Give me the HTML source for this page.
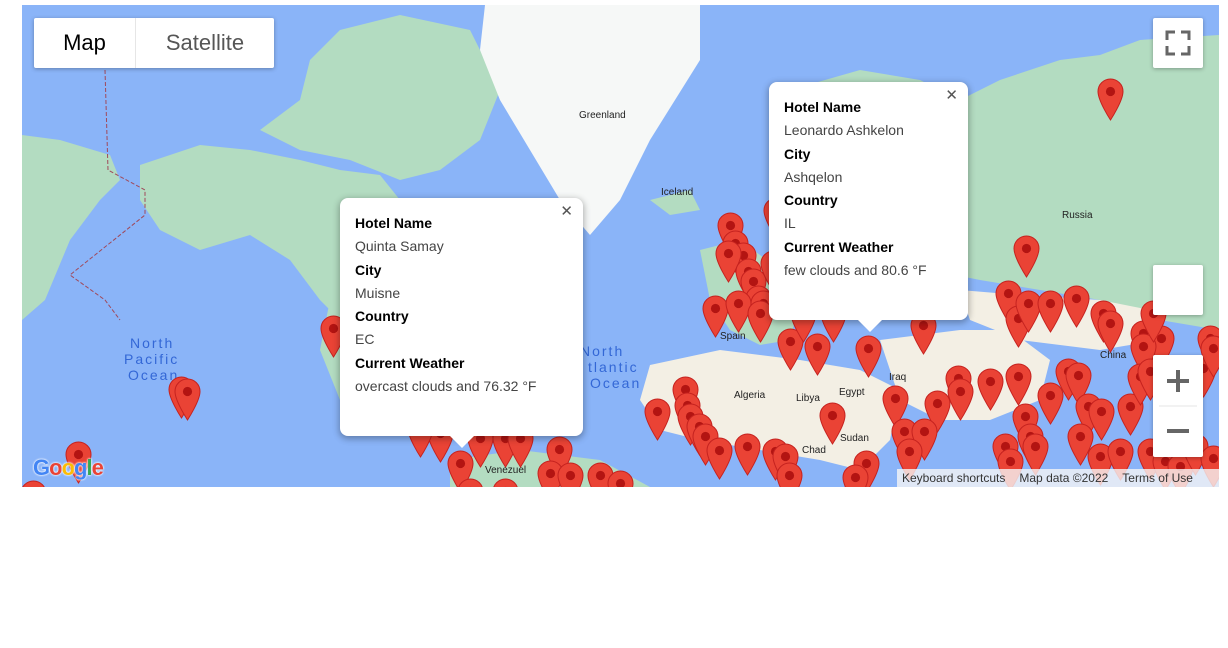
<!DOCTYPE html>
<html><head><meta charset="utf-8"><style>
body{margin:0;width:1228px;height:648px;background:#fff;position:relative;overflow:hidden;font-family:"Liberation Sans",Arial,sans-serif}
#map{position:absolute;left:22px;top:5px;width:1197px;height:482px;background:#8ab4f8;overflow:hidden}
#map svg{position:absolute;left:-22px;top:-5px}
.ctl{position:absolute;background:#fff;border-radius:2px;box-shadow:0 1px 4px rgba(0,0,0,.3)}
.iw{position:absolute;background:#fff;border-radius:8px;box-shadow:0 2px 7px 1px rgba(0,0,0,.3);padding:14px 15px;box-sizing:border-box;font-size:14px;line-height:23.3px}
.iw b{display:block;color:#000;font-weight:bold}
.iw span{display:block;color:#444;font-weight:300}
.iw .x{position:absolute;right:10px;top:2px;font-size:15px;color:#555;font-weight:normal}
.tail{position:absolute;width:0;height:0;border-left:12px solid transparent;border-right:12px solid transparent;border-top:12px solid #fff}
</style></head><body>
<div id="map">
<svg width="1241" height="492" viewBox="0 0 1241 492">
<defs>
<g id="p"><path d="M13.5 1C6.6 1 1 6.6 1 13.5c0 9.5 12.5 28.5 12.5 28.5S26 23 26 13.5C26 6.6 20.4 1 13.5 1z" fill="#ea4335" stroke="#c5221f" stroke-width="1"/><circle cx="13.5" cy="13.5" r="4.6" fill="#b31412"/></g>
</defs>
<g fill="#b3dcc1">
<path d="M22 135 L60 140 L110 155 L120 180 L100 200 L70 240 L45 300 L22 320Z"/>
<path d="M140 165 L200 145 L250 150 L300 160 L340 170 L380 175 L400 200 L430 230 L470 235 L520 225 L560 215 L575 240 L560 270 L520 290 L480 300 L420 320 L390 340 L350 330 L320 300 L290 260 L250 235 L200 250 L160 230 L140 200Z"/>
<path d="M260 130 L300 100 L310 60 L340 30 L400 15 L470 30 L500 90 L480 140 L440 170 L400 180 L350 160 L300 150Z"/>
<path d="M650 200 L690 190 L700 210 L670 215Z"/>
<path d="M790 90 L860 70 L920 80 L960 100 L1000 80 L1060 60 L1100 55 L1140 40 L1219 35 L1219 330 L1160 320 L1100 300 L1040 290 L980 280 L930 270 L880 260 L840 250 L810 230 L800 190 L790 150Z"/>
<path d="M700 250 L740 240 L780 270 L800 300 L790 340 L760 345 L730 330 L710 300Z"/>
<path d="M330 300 L420 310 L440 420 L400 430 L340 400 L320 350Z"/>
<path d="M450 460 L520 450 L600 460 L650 487 L450 487Z"/>
</g>
<g fill="#f3efe4">
<path d="M650 365 L720 350 L800 360 L860 370 L900 390 L890 440 L860 470 L820 460 L760 450 L700 440 L660 430 L640 400Z"/>
<path d="M880 340 L960 330 L1010 330 L1050 360 L1040 400 L990 420 L940 420 L900 400Z"/>
<path d="M960 290 L1020 295 L1100 300 L1150 310 L1160 340 L1100 350 L1020 340 L970 320Z"/>
</g>
<path d="M485 5 L700 5 L700 60 L650 140 L620 200 L590 235 L560 200 L530 150 L500 100 L480 50Z" fill="#f6f8f7"/>
<path d="M105 70 L108 170 L145 190 L145 215 L70 275 L105 300 L120 320" fill="none" stroke="#a0495a" stroke-width="1" stroke-dasharray="4 2"/>
<g font-size="10" fill="#222" font-family="Liberation Sans,sans-serif">
<text x="579" y="118">Greenland</text><text x="661" y="195">Iceland</text><text x="1062" y="218">Russia</text>
<text x="734" y="398">Algeria</text><text x="796" y="401">Libya</text><text x="839" y="395">Egypt</text><text x="802" y="453">Chad</text><text x="840" y="441">Sudan</text><text x="720" y="339">Spain</text><text x="889" y="380">Iraq</text><text x="1100" y="358">China</text><text x="485" y="473">Venezuel</text>
</g>
<g font-size="14" fill="#3367d6" letter-spacing="2" font-family="Liberation Sans,sans-serif">
<text x="130" y="348">North</text><text x="124" y="364">Pacific</text><text x="128" y="380">Ocean</text>
<text x="580" y="356">North</text><text x="588" y="372">tlantic</text><text x="590" y="388">Ocean</text>
</g>
<g>
<use href="#p" x="1097" y="78"/><use href="#p" x="1013" y="235"/>
<use href="#p" x="168" y="376"/><use href="#p" x="174" y="378"/>
<use href="#p" x="65" y="441"/><use href="#p" x="20" y="480"/><use href="#p" x="320" y="315"/>
<use href="#p" x="717" y="212"/><use href="#p" x="722" y="230"/><use href="#p" x="730" y="242"/><use href="#p" x="715" y="240"/><use href="#p" x="735" y="258"/><use href="#p" x="740" y="268"/><use href="#p" x="745" y="285"/><use href="#p" x="760" y="250"/><use href="#p" x="763" y="197"/><use href="#p" x="750" y="290"/>
<use href="#p" x="702" y="295"/><use href="#p" x="725" y="290"/><use href="#p" x="747" y="300"/><use href="#p" x="777" y="328"/><use href="#p" x="804" y="333"/><use href="#p" x="855" y="335"/><use href="#p" x="910" y="312"/><use href="#p" x="790" y="300"/><use href="#p" x="820" y="300"/>
<use href="#p" x="995" y="280"/><use href="#p" x="1005" y="305"/><use href="#p" x="1015" y="290"/><use href="#p" x="1037" y="290"/><use href="#p" x="1063" y="285"/><use href="#p" x="1090" y="300"/><use href="#p" x="1097" y="310"/><use href="#p" x="1130" y="320"/><use href="#p" x="1148" y="325"/><use href="#p" x="1130" y="333"/><use href="#p" x="1197" y="325"/><use href="#p" x="1140" y="300"/>
<use href="#p" x="882" y="385"/><use href="#p" x="924" y="390"/><use href="#p" x="945" y="365"/><use href="#p" x="947" y="378"/><use href="#p" x="977" y="368"/><use href="#p" x="1005" y="363"/><use href="#p" x="1037" y="382"/><use href="#p" x="1055" y="358"/><use href="#p" x="1065" y="362"/><use href="#p" x="1075" y="393"/><use href="#p" x="1088" y="398"/><use href="#p" x="1117" y="393"/><use href="#p" x="1127" y="363"/><use href="#p" x="1137" y="358"/><use href="#p" x="1157" y="373"/><use href="#p" x="1190" y="355"/><use href="#p" x="1200" y="335"/>
<use href="#p" x="644" y="398"/><use href="#p" x="672" y="376"/><use href="#p" x="674" y="392"/><use href="#p" x="677" y="403"/><use href="#p" x="686" y="413"/><use href="#p" x="692" y="423"/><use href="#p" x="706" y="437"/><use href="#p" x="734" y="433"/><use href="#p" x="762" y="438"/><use href="#p" x="772" y="443"/><use href="#p" x="776" y="462"/><use href="#p" x="819" y="402"/><use href="#p" x="853" y="450"/><use href="#p" x="842" y="464"/><use href="#p" x="891" y="418"/><use href="#p" x="911" y="418"/><use href="#p" x="896" y="438"/>
<use href="#p" x="1012" y="403"/><use href="#p" x="1017" y="423"/><use href="#p" x="992" y="433"/><use href="#p" x="997" y="448"/><use href="#p" x="1022" y="433"/><use href="#p" x="1067" y="423"/><use href="#p" x="1087" y="443"/><use href="#p" x="1107" y="438"/><use href="#p" x="1137" y="438"/><use href="#p" x="1152" y="448"/><use href="#p" x="1167" y="453"/><use href="#p" x="1182" y="433"/><use href="#p" x="1200" y="445"/>
<use href="#p" x="447" y="450"/><use href="#p" x="467" y="425"/><use href="#p" x="492" y="425"/><use href="#p" x="507" y="425"/><use href="#p" x="546" y="436"/><use href="#p" x="537" y="460"/><use href="#p" x="557" y="462"/><use href="#p" x="587" y="462"/><use href="#p" x="607" y="470"/><use href="#p" x="492" y="478"/><use href="#p" x="457" y="478"/><use href="#p" x="427" y="420"/><use href="#p" x="407" y="415"/>
</g>
</svg>
</div>
<div class="ctl" style="left:34px;top:18px;width:240px;height:50px;display:flex;font-size:22px">
<div style="width:101px;text-align:center;line-height:50px;color:#000;border-right:1px solid #e6e6e6">Map</div>
<div style="flex:1;text-align:center;line-height:50px;color:#565656">Satellite</div></div>
<div class="ctl" style="left:1153px;top:18px;width:50px;height:50px">
<svg width="50" height="50" viewBox="0 0 50 50" fill="none" stroke="#666" stroke-width="3"><path d="M14 22V14h8M28 14h8v8M36 28v8h-8M22 36h-8v-8"/></svg></div>
<div class="ctl" style="left:1153px;top:265px;width:50px;height:50px"></div>
<div class="ctl" style="left:1153px;top:355px;width:50px;height:102px">
<svg width="50" height="102" viewBox="0 0 50 102"><path d="M25 15v22M14 26h22M14 76h22" stroke="#666" stroke-width="4"/><path d="M6 51h38" stroke="#e6e6e6" stroke-width="1"/></svg></div>
<div style="position:absolute;left:33px;top:455px;font-size:22px;font-weight:bold;letter-spacing:-1px;text-shadow:0 0 2px #fff,0 0 2px #fff"><span style="color:#4285f4">G</span><span style="color:#ea4335">o</span><span style="color:#fbbc05">o</span><span style="color:#4285f4">g</span><span style="color:#34a853">l</span><span style="color:#ea4335">e</span></div>
<div style="position:absolute;left:897px;top:469px;width:322px;height:18px;background:rgba(245,245,245,.8);font-size:12px;line-height:18px;color:#333;white-space:nowrap">
<span style="margin-left:5px">Keyboard shortcuts</span><span style="margin-left:14px">Map data ©2022</span><span style="margin-left:14px">Terms of Use</span></div>
<div class="iw" style="left:340px;top:198px;width:243px;height:238px">
<div class="x">✕</div>
<b>Hotel Name</b><span>Quinta Samay</span><b>City</b><span>Muisne</span><b>Country</b><span>EC</span><b>Current Weather</b><span>overcast clouds and 76.32 °F</span></div>
<div class="tail" style="left:450px;top:436px"></div>
<div class="iw" style="left:769px;top:82px;width:199px;height:238px">
<div class="x">✕</div>
<b>Hotel Name</b><span>Leonardo Ashkelon</span><b>City</b><span>Ashqelon</span><b>Country</b><span>IL</span><b>Current Weather</b><span>few clouds and 80.6 °F</span></div>
<div class="tail" style="left:858px;top:320px"></div>
</body></html>
